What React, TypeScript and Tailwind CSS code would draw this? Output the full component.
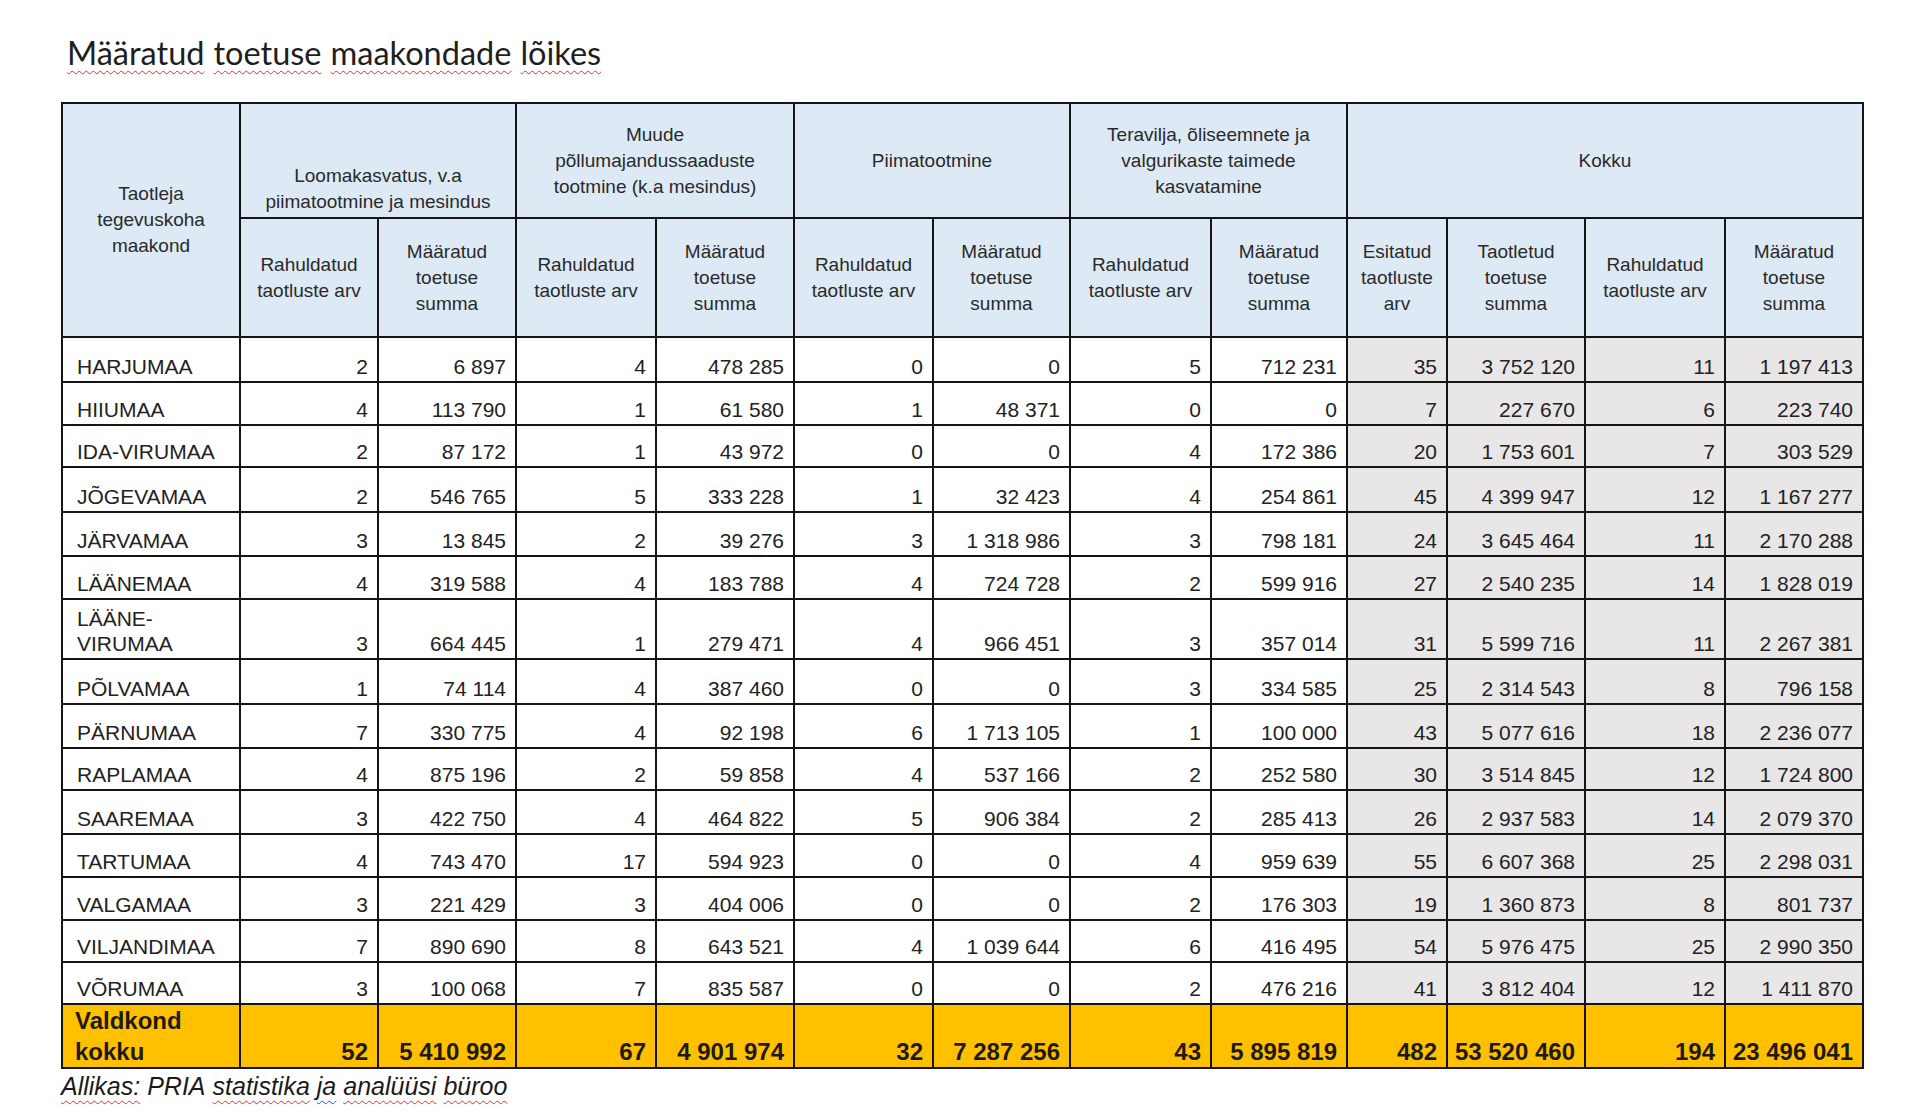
const rows: { name: string[]; h: string; v: string[] }[] = [
  { name: ["HARJUMAA"], h: "h-[45px]", v: ["2", "6 897", "4", "478 285", "0", "0", "5", "712 231", "35", "3 752 120", "11", "1 197 413"] },
  { name: ["HIIUMAA"], h: "h-[43px]", v: ["4", "113 790", "1", "61 580", "1", "48 371", "0", "0", "7", "227 670", "6", "223 740"] },
  { name: ["IDA-VIRUMAA"], h: "h-[42px]", v: ["2", "87 172", "1", "43 972", "0", "0", "4", "172 386", "20", "1 753 601", "7", "303 529"] },
  { name: ["JÕGEVAMAA"], h: "h-[45px]", v: ["2", "546 765", "5", "333 228", "1", "32 423", "4", "254 861", "45", "4 399 947", "12", "1 167 277"] },
  { name: ["JÄRVAMAA"], h: "h-[44px]", v: ["3", "13 845", "2", "39 276", "3", "1 318 986", "3", "798 181", "24", "3 645 464", "11", "2 170 288"] },
  { name: ["LÄÄNEMAA"], h: "h-[43px]", v: ["4", "319 588", "4", "183 788", "4", "724 728", "2", "599 916", "27", "2 540 235", "14", "1 828 019"] },
  { name: ["LÄÄNE-", "VIRUMAA"], h: "h-[60px]", v: ["3", "664 445", "1", "279 471", "4", "966 451", "3", "357 014", "31", "5 599 716", "11", "2 267 381"] },
  { name: ["PÕLVAMAA"], h: "h-[45px]", v: ["1", "74 114", "4", "387 460", "0", "0", "3", "334 585", "25", "2 314 543", "8", "796 158"] },
  { name: ["PÄRNUMAA"], h: "h-[44px]", v: ["7", "330 775", "4", "92 198", "6", "1 713 105", "1", "100 000", "43", "5 077 616", "18", "2 236 077"] },
  { name: ["RAPLAMAA"], h: "h-[42px]", v: ["4", "875 196", "2", "59 858", "4", "537 166", "2", "252 580", "30", "3 514 845", "12", "1 724 800"] },
  { name: ["SAAREMAA"], h: "h-[44px]", v: ["3", "422 750", "4", "464 822", "5", "906 384", "2", "285 413", "26", "2 937 583", "14", "2 079 370"] },
  { name: ["TARTUMAA"], h: "h-[43px]", v: ["4", "743 470", "17", "594 923", "0", "0", "4", "959 639", "55", "6 607 368", "25", "2 298 031"] },
  { name: ["VALGAMAA"], h: "h-[43px]", v: ["3", "221 429", "3", "404 006", "0", "0", "2", "176 303", "19", "1 360 873", "8", "801 737"] },
  { name: ["VILJANDIMAA"], h: "h-[42px]", v: ["7", "890 690", "8", "643 521", "4", "1 039 644", "6", "416 495", "54", "5 976 475", "25", "2 990 350"] },
  { name: ["VÕRUMAA"], h: "h-[42px]", v: ["3", "100 068", "7", "835 587", "0", "0", "2", "476 216", "41", "3 812 404", "12", "1 411 870"] },
];

const totals = ["52", "5 410 992", "67", "4 901 974", "32", "7 287 256", "43", "5 895 819", "482", "53 520 460", "194", "23 496 041"];

const groups: { lines: string[]; bottom?: boolean }[] = [
  { lines: ["Loomakasvatus, v.a", "piimatootmine ja mesindus"], bottom: true },
  { lines: ["Muude", "põllumajandussaaduste", "tootmine (k.a mesindus)"] },
  { lines: ["Piimatootmine"] },
  { lines: ["Teravilja, õliseemnete ja", "valgurikaste taimede", "kasvatamine"] },
];

const sub = [
  ["Rahuldatud", "taotluste arv"],
  ["Määratud", "toetuse", "summa"],
];

const kokkuSub = [
  ["Esitatud", "taotluste", "arv"],
  ["Taotletud", "toetuse", "summa"],
  ["Rahuldatud", "taotluste arv"],
  ["Määratud", "toetuse", "summa"],
];

const cell = "border-2 border-[#151515]";
const head = `${cell} bg-[#dde9f5] font-normal text-[#2a2a2a] text-[19px] leading-[26px] text-center`;

function Lines({ lines }: { lines: string[] }) {
  return (
    <>
      {lines.map((l) => (
        <div key={l} className="whitespace-nowrap">
          {l}
        </div>
      ))}
    </>
  );
}

function Spell({ children, blue }: { children: string; blue?: boolean }) {
  return (
    <span
      className={`underline decoration-wavy decoration-1 underline-offset-[5px] ${blue ? "decoration-[#2f55c8]" : "decoration-[#e0302a]"}`}
    >
      {children}
    </span>
  );
}

export default function App() {
  return (
    <div className="min-h-[1120px] w-[1920px] bg-white font-['Liberation_Sans',Arial,sans-serif] text-[#222]">
      <div className="pl-[67px] pt-[33px] pb-[29px]">
        <h1 className="font-['Lato',sans-serif] text-[32.5px] leading-[40px] text-[#1e1e1e] flex gap-[9px]">
          <Spell>Määratud</Spell>
          <Spell>toetuse</Spell>
          <Spell>maakondade</Spell>
          <Spell>lõikes</Spell>
        </h1>
      </div>

      <div className="pl-[61px]">
        <table className="table-fixed border-collapse border-2 border-[#151515]">
          <colgroup>
            <col className="w-[178px]" />
            <col className="w-[138px]" />
            <col className="w-[138px]" />
            <col className="w-[140px]" />
            <col className="w-[138px]" />
            <col className="w-[139px]" />
            <col className="w-[137px]" />
            <col className="w-[141px]" />
            <col className="w-[136px]" />
            <col className="w-[100px]" />
            <col className="w-[138px]" />
            <col className="w-[140px]" />
            <col className="w-[138px]" />
          </colgroup>
          <thead>
            <tr className="h-[115px]">
              <th rowSpan={2} className={`${head} align-middle`}>
                <Lines lines={["Taotleja", "tegevuskoha", "maakond"]} />
              </th>
              {groups.map((g) => (
                <th key={g.lines[0]} colSpan={2} className={`${head} ${g.bottom ? "align-bottom pb-[2px]" : "align-middle"}`}>
                  <Lines lines={g.lines} />
                </th>
              ))}
              <th colSpan={4} className={`${head} align-middle`}>
                Kokku
              </th>
            </tr>
            <tr className="h-[119px]">
              {groups.map((g) =>
                sub.map((s) => (
                  <th key={g.lines[0] + s[0]} className={`${head} align-middle`}>
                    <Lines lines={s} />
                  </th>
                ))
              )}
              {kokkuSub.map((s) => (
                <th key={"k" + s[0]} className={`${head} align-middle`}>
                  <Lines lines={s} />
                </th>
              ))}
            </tr>
          </thead>
          <tbody className="text-[21px] leading-[25px]">
            {rows.map((r) => (
              <tr key={r.name.join("")} className={r.h}>
                <td className={`${cell} align-bottom pl-[14px] pb-[2px] uppercase`}>
                  <Lines lines={r.name} />
                </td>
                {r.v.map((v, i) => (
                  <td
                    key={i}
                    className={`${cell} align-bottom text-right pr-[9px] pb-[2px] whitespace-nowrap ${i >= 8 ? "bg-[#e8e6e6]" : "bg-white"}`}
                  >
                    {v}
                  </td>
                ))}
              </tr>
            ))}
            <tr className="h-[62px] bg-[#ffc000] font-bold text-[24px] leading-[31px] text-[#1f1a10]">
              <td className={`${cell} align-bottom pl-[12px] pb-0`}>
                <Lines lines={["Valdkond", "kokku"]} />
              </td>
              {totals.map((v, i) => (
                <td key={i} className={`${cell} align-bottom text-right pr-[9px] pb-0 whitespace-nowrap`}>
                  {v}
                </td>
              ))}
            </tr>
          </tbody>
        </table>

        <p className="pt-[3px] italic text-[25px] leading-[28px] text-[#1a1a1a] flex gap-[7px]">
          <Spell>Allikas:</Spell>
          <span>PRIA</span>
          <Spell>statistika</Spell>
          <Spell blue>ja</Spell>
          <Spell>analüüsi</Spell>
          <Spell>büroo</Spell>
        </p>
      </div>
    </div>
  );
}
